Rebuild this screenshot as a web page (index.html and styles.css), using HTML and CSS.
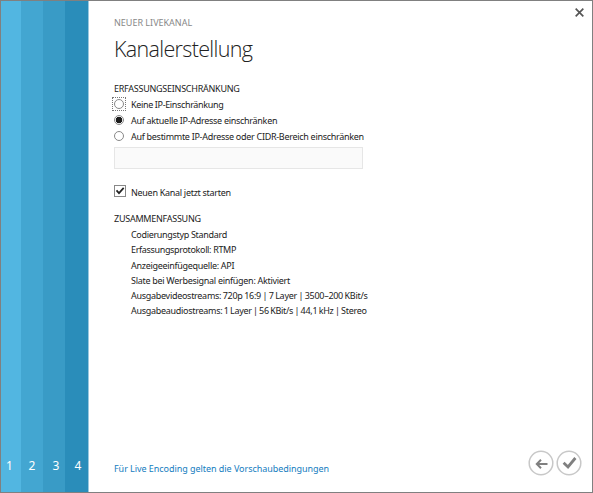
FILE: index.html
```html
<!DOCTYPE html>
<html lang="de">
<head>
<meta charset="utf-8">
<title>Neuer Livekanal</title>
<link rel="stylesheet" href="styles.css">
</head>
<body>
<div class="dialog">
  <nav class="steps">
    <span class="step s1">1</span><span class="step s2">2</span><span class="step s3">3</span><span class="step s4">4</span>
  </nav>
  <main class="content">
    <div class="eyebrow">NEUER LIVEKANAL</div>
    <h1>Kanalerstellung</h1>
    <h2 class="head-restrict">ERFASSUNGSEINSCHRÄNKUNG</h2>
    <div class="options">
      <label class="option"><i class="radio focused"></i><span class="t-none">Keine IP-Einschränkung</span></label>
      <label class="option"><i class="radio checked"></i><span>Auf aktuelle IP-Adresse einschränken</span></label>
      <label class="option"><i class="radio"></i><span>Auf bestimmte IP-Adresse oder CIDR-Bereich einschränken</span></label>
    </div>
    <div class="field"></div>
    <label class="option start"><i class="check"><svg viewBox="0 0 12 12"><path d="M1.8 5.2 4.8 8.6 10.4 2.2"/></svg></i><span>Neuen Kanal jetzt starten</span></label>
    <h2 class="head-summary">ZUSAMMENFASSUNG</h2>
    <ul class="summary">
      <li class="t-coding">Codierungstyp Standard</li>
      <li class="t-protocol">Erfassungsprotokoll: RTMP</li>
      <li class="t-protocol">Anzeigeeinfügequelle: API</li>
      <li class="t-slate">Slate bei Werbesignal einfügen: Aktiviert</li>
      <li class="t-video">Ausgabevideostreams: 720p 16:9 | 7 Layer | 3500–200 KBit/s</li>
      <li class="t-audio">Ausgabeaudiostreams: 1 Layer | 56 KBit/s | 44,1 kHz | Stereo</li>
    </ul>
    <footer>
      <a class="t-link">Für Live Encoding gelten die Vorschaubedingungen</a>
      <div class="actions">
        <svg viewBox="0 0 26 26"><circle cx="13" cy="13" r="11.8"/><path class="arrow" d="M19.5 14H9M13 9.8 8.8 14l4.2 4.2"/></svg>
        <svg viewBox="0 0 26 26"><circle cx="13" cy="13" r="11.8"/><path class="tick" d="M7.6 12.8 12 17 19.4 8"/></svg>
      </div>
    </footer>
  </main>
  <svg class="close" viewBox="0 0 8 8"><path d="M.6.6 7.4 7.4M7.4.6.6 7.4"/></svg>
</div>
</body>
</html>
```
FILE: styles.css
```css
* { box-sizing: border-box; }
body { margin: 0; font-family: "Noto Sans", "Open Sans", sans-serif; font-size: 9px; color: #222; background: #fff; }
.dialog { position: relative; display: flex; width: 593px; height: 493px; border: 1px solid #808080; }
.steps { display: grid; grid-template-columns: 20px 22px 22px 23px 1px; height: 491px; background: #9bc8df; flex: none; }
.step { display: flex; align-items: flex-end; justify-content: center; padding-bottom: 17px; color: #fff; font-size: 12px; line-height: 18px; }
.s1 { background: #52b6e1; padding-right: 3px; }
.s2 { background: #43a6d1; }
.s3 { background: #399bc6; padding-left: 4px; }
.s4 { background: #2a8dba; padding-left: 3px; }
.content { display: flex; flex-direction: column; flex: 1; padding: 14px 10px 0 25px; white-space: nowrap; letter-spacing: -.29px; }
.eyebrow { height: 16px; line-height: 16px; color: #888; letter-spacing: 0; }
h1 { margin: 4px 0 0; height: 28px; font: 300 21.5px/28px "Open Sans", sans-serif; letter-spacing: -.67px; color: #222; }
h2 { margin: 0; height: 16px; font-size: 9px; line-height: 16px; font-weight: 400; letter-spacing: -.26px; }
.head-restrict { margin-top: 18px; }
.options { display: grid; grid-template-rows: 16px 16px 15px; height: 48px; }
.option { display: flex; align-items: center; line-height: 16px; }
.radio { position: relative; top: -1px; width: 10px; height: 10px; margin-right: 7px; border: 1px solid #888; border-radius: 50%; flex: none; }
.focused::after { content: ""; position: absolute; inset: -3px; border: 1px dotted #777; }
.checked { background: radial-gradient(circle, #1c1c1c 0 3px, #fff 3.6px); }
.t-none { letter-spacing: -.35px; }
.field { width: 249px; height: 22px; margin-top: 2px; border: 1px solid #e6e6e6; background: #fafafa; }
.start { margin-top: 16px; height: 16px; }
.check { display: flex; width: 12px; height: 12px; margin-right: 5px; border: 1px solid #888; transform: translateY(-2px); }
.check svg { width: 10px; height: 10px; }
.check path { fill: none; stroke: #222; stroke-width: 2; }
.head-summary { margin-top: 10px; }
.summary { display: grid; grid-auto-rows: 15.25px; margin: 0; padding: 0 0 0 17px; list-style: none; line-height: 16px; }
.t-coding { letter-spacing: -.32px; }
.t-protocol { letter-spacing: -.34px; }
.t-protocol + .t-protocol { letter-spacing: -.3px; }
.t-video { word-spacing: -.45px; }
.t-audio { word-spacing: -.65px; }
footer { display: flex; align-items: center; justify-content: space-between; margin-top: auto; height: 58px; }
.t-link { margin-top: 10px; color: #147dc0; letter-spacing: -.05px; }
.actions { display: flex; gap: 2px; }
.actions svg { width: 26px; height: 26px; fill: none; }
.actions circle { stroke: #c8c8c8; stroke-width: 1.5; }
.arrow { stroke: #808080; stroke-width: 2; }
.tick { stroke: #808080; stroke-width: 2.8; }
.close { position: absolute; right: 8px; top: 7px; width: 9px; height: 9px; }
.close path { stroke: #555; stroke-width: 1.5; }
```
